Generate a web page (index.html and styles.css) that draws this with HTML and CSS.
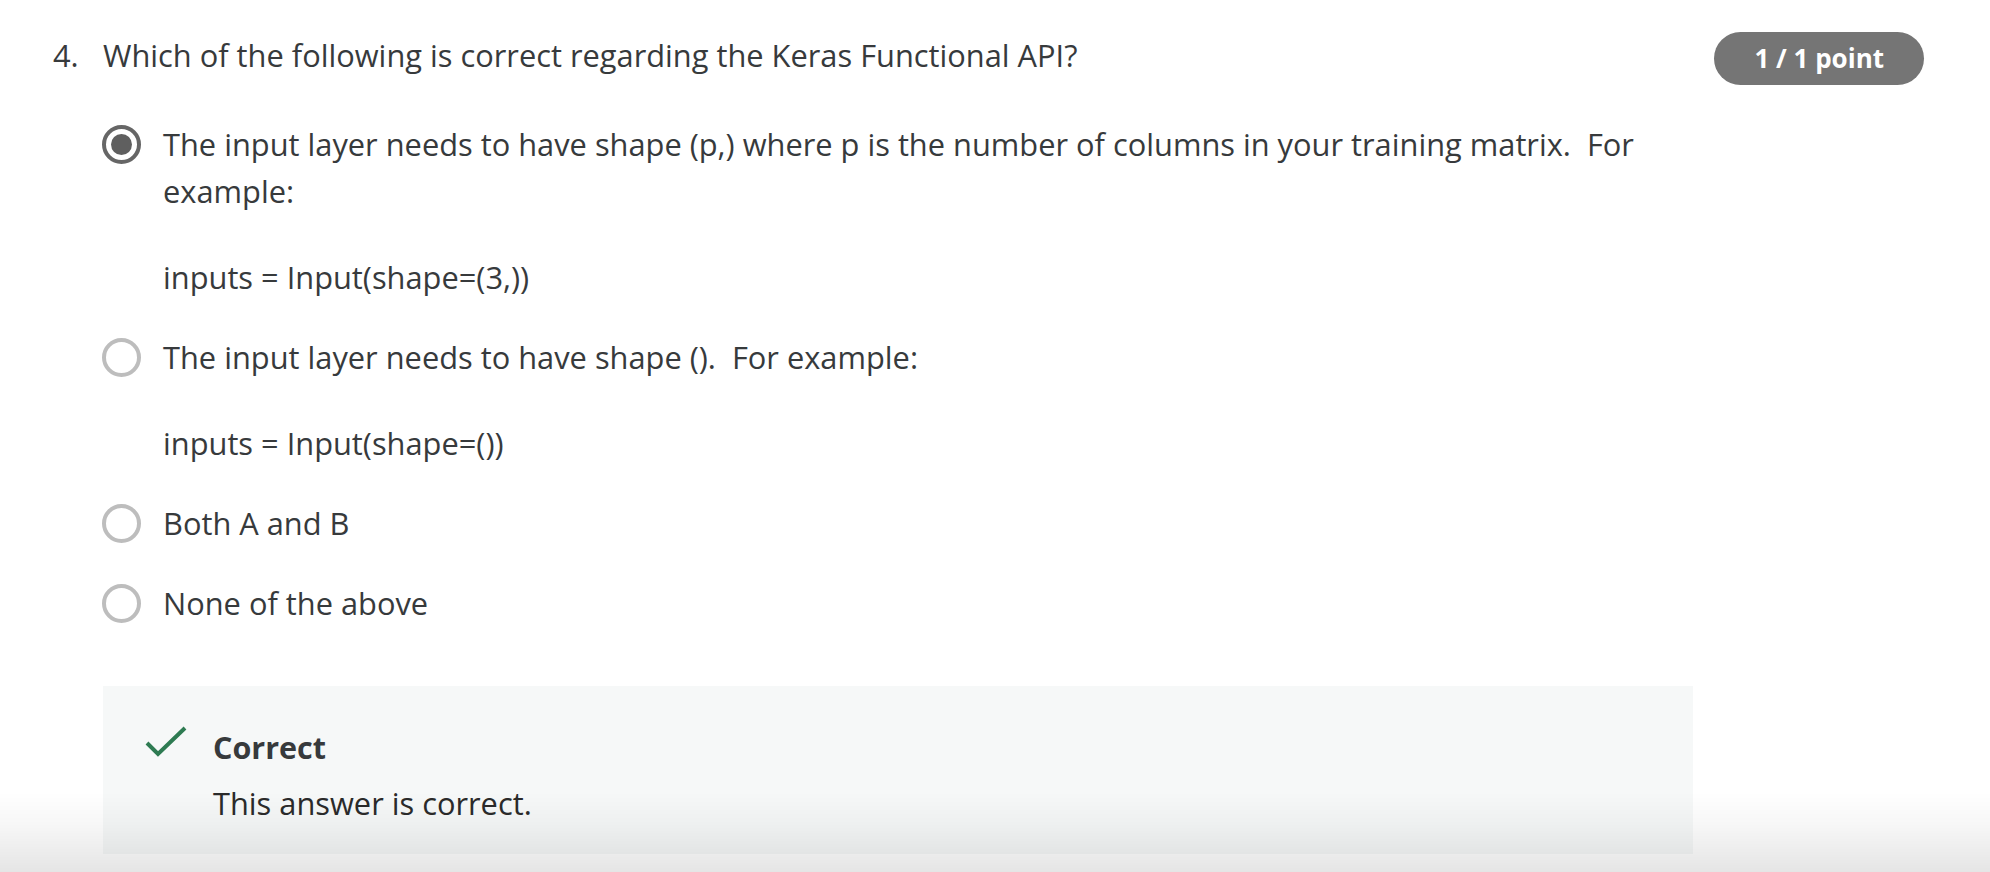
FILE: index.html
```html
<!DOCTYPE html>
<html lang="en">
<head>
<meta charset="utf-8">
<title>Quiz question 4</title>
<link rel="stylesheet" href="styles.css">
</head>
<body>
<main class="quiz">
  <div class="question-head">
    <div class="q-title">
      <span class="q-num">4.</span>
      <span class="q-text">Which of the following is correct regarding the Keras Functional API?</span>
    </div>
    <span class="badge">1 / 1 point</span>
  </div>

  <div class="options">
    <div class="option">
      <span class="radio radio-checked"></span>
      <div class="option-body">
        <p>The input layer needs to have shape (p,) where p is the number of columns in your training matrix.&nbsp; For example:</p>
        <p>inputs = Input(shape=(3,))</p>
      </div>
    </div>
    <div class="option">
      <span class="radio"></span>
      <div class="option-body">
        <p>The input layer needs to have shape ().&nbsp; For example:</p>
        <p>inputs = Input(shape=())</p>
      </div>
    </div>
    <div class="option">
      <span class="radio"></span>
      <div class="option-body">
        <p>Both A and B</p>
      </div>
    </div>
    <div class="option">
      <span class="radio"></span>
      <div class="option-body">
        <p>None of the above</p>
      </div>
    </div>
  </div>

  <div class="feedback">
    <svg class="check" width="42" height="32" viewBox="0 0 42 32" aria-hidden="true">
      <polyline points="2,17 13,28 40,2" fill="none" stroke="#2e7b52" stroke-width="4"/>
    </svg>
    <div class="feedback-body">
      <div class="feedback-title">Correct</div>
      <div class="feedback-text">This answer is correct.</div>
    </div>
  </div>
</main>
<div class="bottom-shade"></div>
</body>
</html>
```

FILE: styles.css
```css
html, body {
  margin: 0;
  padding: 0;
  background: #ffffff;
}

body {
  font-family: "Open Sans", "Liberation Sans", sans-serif;
  color: #373a3c;
  font-size: 30.8px;
  line-height: 47px;
  overflow: hidden;
}

.quiz {
  padding: 32px 66px 0 53px;
}

.question-head {
  display: flex;
  justify-content: space-between;
  align-items: flex-start;
}

.q-title {
  display: flex;
}

.q-num {
  width: 50px;
  flex: none;
}

.badge {
  flex: none;
  height: 53px;
  line-height: 53px;
  padding: 0 40px;
  border-radius: 27px;
  background: #757575;
  color: #ffffff;
  font-weight: 700;
  font-size: 26px;
}

.options {
  margin: 36px 0 0 49px;
  width: 1591px;
  display: flex;
  flex-direction: column;
  gap: 33px;
}

.option {
  display: flex;
  align-items: flex-start;
  gap: 22px;
}

.radio {
  flex: none;
  box-sizing: border-box;
  width: 39px;
  height: 39px;
  margin-top: 4px;
  border-radius: 50%;
  border: 4px solid #bdbdbd;
  background: #ffffff;
  position: relative;
}

.radio-checked {
  border-color: #666666;
}

.radio-checked::after {
  content: "";
  position: absolute;
  left: 5px;
  top: 5px;
  width: 21px;
  height: 21px;
  border-radius: 50%;
  background: #5f5f5f;
}

.option-body {
  flex: 1;
}

.option-body p {
  margin: 0;
}

.option-body p + p {
  margin-top: 39px;
}

.feedback {
  margin: 59px 0 0 50px;
  width: 1590px;
  box-sizing: border-box;
  background: #f6f8f8;
  padding: 38px 0 27px 42px;
  display: flex;
  align-items: flex-start;
  gap: 26px;
}

.check {
  flex: none;
  margin-top: 2px;
}

.feedback-title {
  font-weight: 700;
  font-size: 30.5px;
  color: #373a3c;
}

.feedback-text {
  margin-top: 9px;
  color: #2b2b2b;
}

.bottom-shade {
  position: fixed;
  left: 0;
  right: 0;
  bottom: 0;
  height: 80px;
  pointer-events: none;
  background: linear-gradient(to bottom, rgba(0, 0, 0, 0) 0%, rgba(0, 0, 0, 0.03) 40%, rgba(0, 0, 0, 0.1) 100%);
}
```
